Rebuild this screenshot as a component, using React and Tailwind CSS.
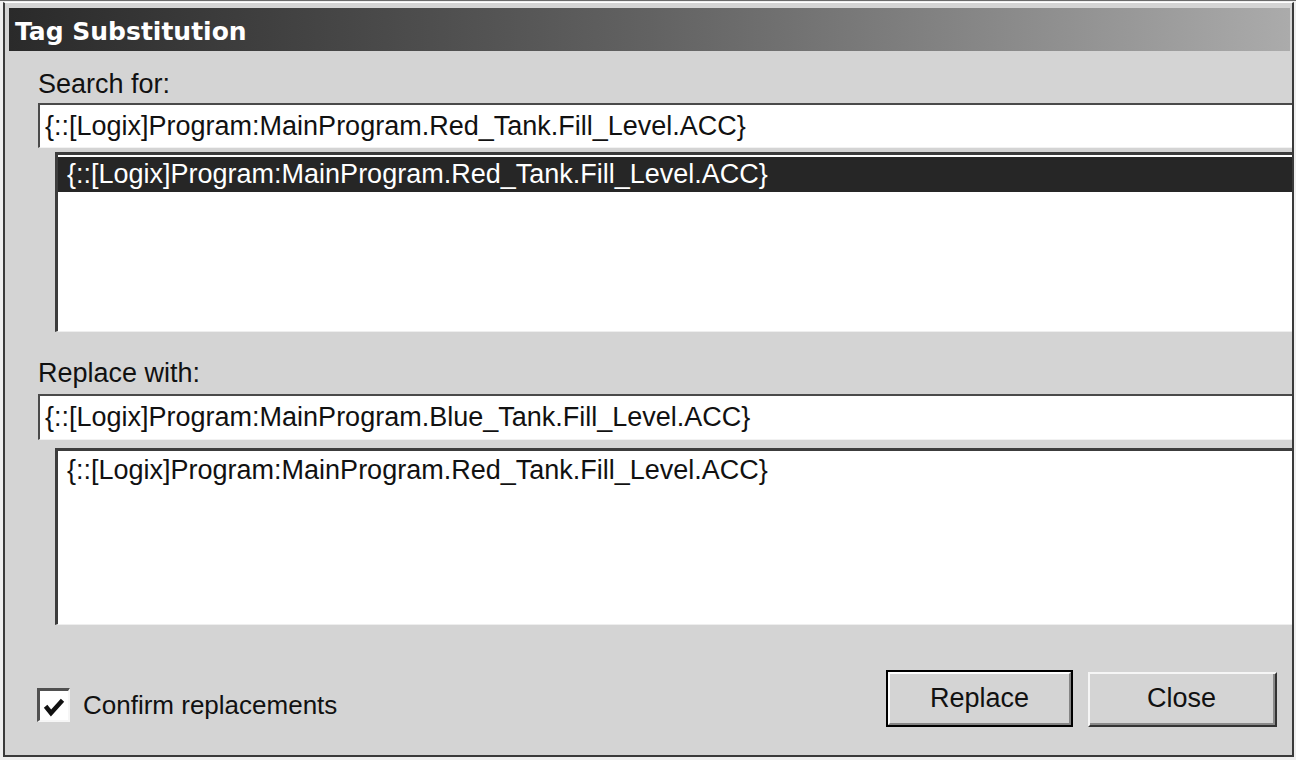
import React from 'react';

const ui = { fontFamily: '"Liberation Sans", Arial, sans-serif' };
const SEARCH = '{::[Logix]Program:MainProgram.Red_Tank.Fill_Level.ACC}';
const REPLACE = '{::[Logix]Program:MainProgram.Blue_Tank.Fill_Level.ACC}';

// sunken single-line edit box
const EditBox = ({ value, className = '' }) => (
  <div
    className={`ml-[33px] bg-white border-t-2 border-l-2 border-[#4a4a4a] border-b border-b-[#f2f2f2] flex items-center pl-[5px] text-[27px] text-[#111] whitespace-nowrap overflow-hidden ${className}`}
  >
    {value}
  </div>
);

// sunken list box
const ListBox = ({ items, selected, className = '' }) => (
  <div
    className={`ml-[50px] bg-white border-t-[3px] border-l-[3px] border-[#3c3c3c] border-b border-b-[#eeeeee] overflow-hidden ${className}`}
  >
    {items.map((it, i) => (
      <div
        key={i}
        className={`mt-[2px] h-[35px] leading-[35px] pl-[9px] text-[27px] whitespace-nowrap ${
          i === selected ? 'bg-[#262626] text-white' : 'text-[#111]'
        }`}
      >
        {it}
      </div>
    ))}
  </div>
);

export default function App() {
  return (
    <div
      className="w-[1296px] h-[760px] bg-[#efefef] border-t border-[#6a6a6a] pt-[1px] pl-[3px] pr-[2px] pb-[3px] overflow-hidden"
      style={ui}
    >
      <div className="h-full flex flex-col bg-[#d4d4d4] border-l-2 border-r-2 border-b-2 border-[#3a3a3a] border-t border-t-white">
        {/* title bar */}
        <div className="mt-[5px] ml-[4px] mr-[2px] h-[43px] shrink-0 flex items-center pl-[6px] pt-[3px] bg-gradient-to-r from-[#2a2a2a] via-[#626262] to-[#ababab]">
          <span
            className="text-white font-bold text-[25px] leading-none"
            style={{ fontFamily: '"DejaVu Sans", Verdana, sans-serif' }}
          >
            Tag Substitution
          </span>
        </div>

        <div className="mt-[18px] pl-[33px] h-[30px] leading-[30px] text-[27px] text-[#111]">Search for:</div>
        <EditBox value={SEARCH} className="mt-[4px] h-[45px] shrink-0" />
        <ListBox items={[SEARCH]} selected={0} className="mt-[4px] h-[180px] shrink-0" />

        <div className="mt-[26px] pl-[33px] h-[30px] leading-[30px] text-[27px] text-[#111]">Replace with:</div>
        <EditBox value={REPLACE} className="mt-[6px] h-[46px] shrink-0" />
        <ListBox items={[SEARCH]} selected={-1} className="mt-[8px] h-[177px] shrink-0" />

        {/* bottom row */}
        <div className="flex flex-1 items-start">
          <div className="mt-[63px] ml-[32px] flex items-center gap-[13px]">
            <div className="w-[33px] h-[34px] bg-white border-t-[3px] border-l-[3px] border-[#505050] border-b-2 border-r-2 border-b-[#f6f6f6] border-r-[#f6f6f6]">
              <svg width="28" height="29" viewBox="0 0 28 29">
                <path d="M7 17 L11 22 L21 11" fill="none" stroke="#111" strokeWidth="4.5" strokeLinecap="square" />
              </svg>
            </div>
            <span className="text-[26px] text-[#111] leading-none">Confirm replacements</span>
          </div>

          <div className="ml-auto mr-[15px] mt-[45px] flex gap-[15px]">
            <button className="w-[187px] h-[57px] border-2 border-black p-0">
              <div className="h-full border-t-2 border-l-2 border-white border-b-2 border-r-2 border-b-[#858585] border-r-[#858585] flex items-center justify-center text-[27px] text-[#111]">
                Replace
              </div>
            </button>
            <button className="mt-[2px] w-[189px] h-[55px] border-t-2 border-l-2 border-[#f6f6f6] border-b-2 border-r-2 border-b-[#333] border-r-[#333] p-0">
              <div className="h-full border-b-2 border-r-2 border-[#8a8a8a] flex items-center justify-center text-[27px] text-[#111]">
                Close
              </div>
            </button>
          </div>
        </div>
      </div>
    </div>
  );
}
